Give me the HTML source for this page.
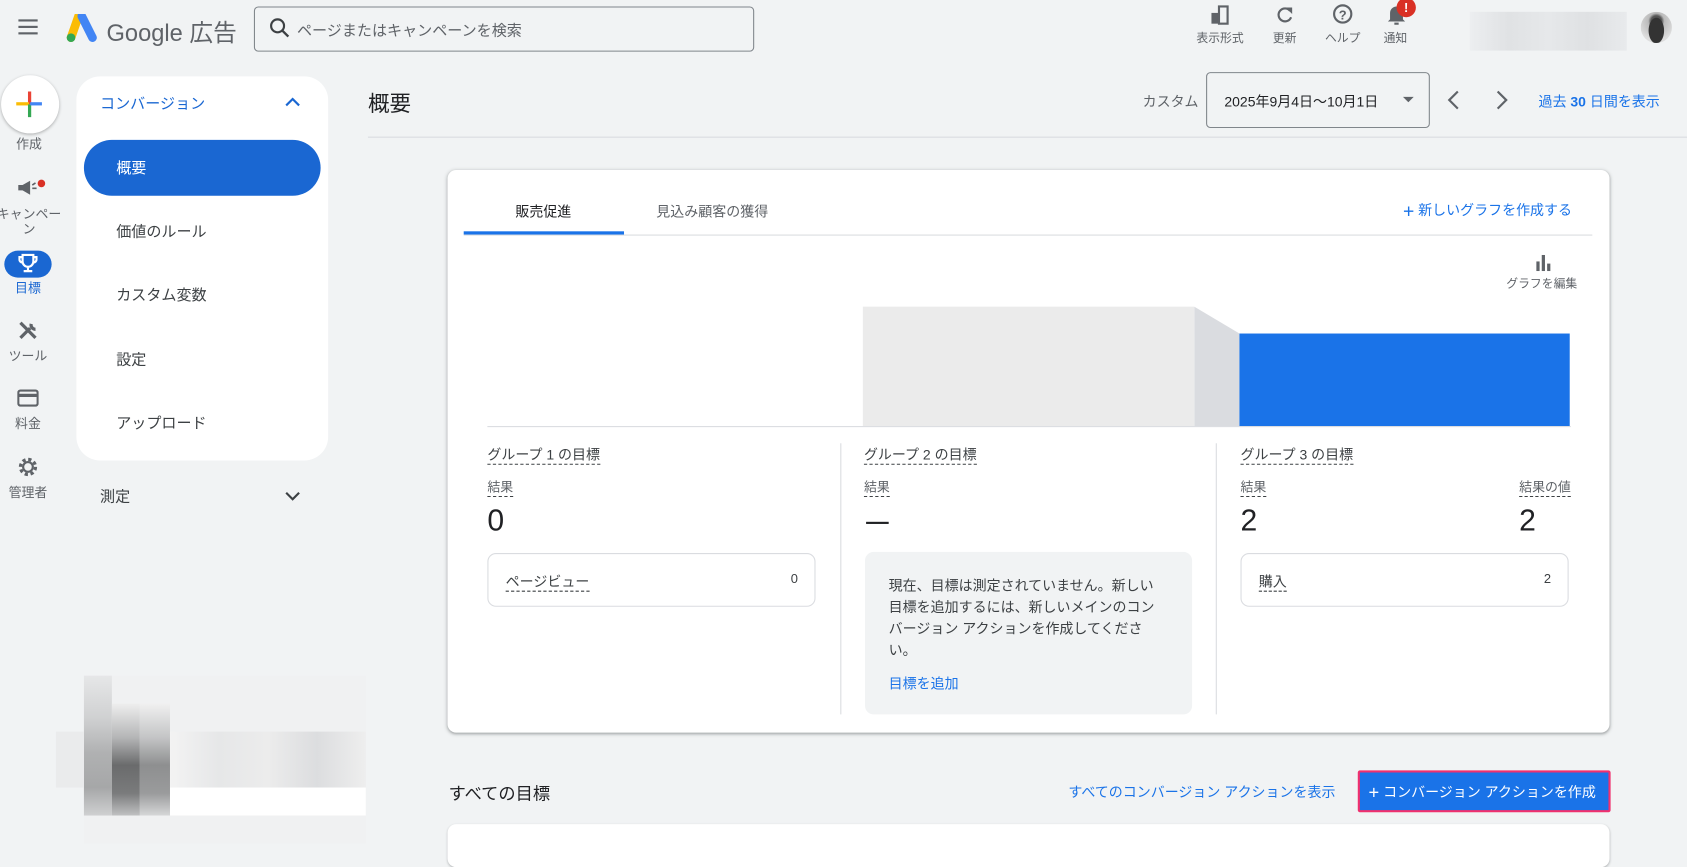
<!DOCTYPE html>
<html><head><meta charset="utf-8"><style>
*{box-sizing:border-box;margin:0;padding:0}
html,body{width:1687px;height:843px;overflow:hidden;background:#f1f3f4}
body{font-family:"Liberation Sans","Noto Sans CJK JP",sans-serif;color:#3c4043}
#w{position:absolute;left:0;top:0;width:1568px;height:784px;transform:scale(1.07589);transform-origin:0 0}
.a{position:absolute;white-space:nowrap}
.blue{color:#1a73e8}
.lbl{font-size:11px;color:#5f6368;text-align:center;width:70px}
.dot{border-bottom:1px dashed #3c4043;padding-bottom:1px}
.nav{font-size:14px;color:#3c4043}
</style></head><body><div id="w">
<svg class="a" style="left:17px;top:17px" width="20" height="16"><rect y="1" width="18" height="2" fill="#5f6368"/><rect y="7" width="18" height="2" fill="#5f6368"/><rect y="13" width="18" height="2" fill="#5f6368"/></svg>
<svg class="a" style="left:60px;top:13px" width="32" height="26" viewBox="0 0 32 26"><path d="M13 2 L6 22" stroke="#fbbc04" stroke-width="8" stroke-linecap="round"/><path d="M16 2 L26 22" stroke="#4285f4" stroke-width="8" stroke-linecap="round"/><circle cx="6" cy="22" r="4" fill="#34a853"/></svg>
<div class="a" style="left:99px;top:13px;font-size:22px;color:#5f6368">Google 広告</div>
<div class="a" style="left:236px;top:6px;width:465px;height:42px;border:1px solid #80868b;border-radius:4px"></div>
<svg class="a" style="left:250px;top:16px" width="20" height="20"><circle cx="8" cy="8" r="6" fill="none" stroke="#3c4043" stroke-width="2"/><path d="M12.5 12.5 L18 18" stroke="#3c4043" stroke-width="2.2"/></svg>
<div class="a" style="left:276px;top:18px;font-size:14px;color:#5f6368">ページまたはキャンペーンを検索</div>
<svg class="a" style="left:1124px;top:4px" width="20" height="20"><rect x="2" y="8" width="7" height="10" fill="#5f6368"/><rect x="9" y="2" width="8" height="16" fill="none" stroke="#5f6368" stroke-width="2"/></svg>
<div class="a lbl" style="left:1099px;top:27px">表示形式</div>
<svg class="a" style="left:1184px;top:4px" width="20" height="20"><path d="M15 6 A6 6 0 1 0 16 12" fill="none" stroke="#5f6368" stroke-width="2"/><path d="M11 3 L17 3 L17 9 Z" fill="#5f6368"/></svg>
<div class="a lbl" style="left:1159px;top:27px">更新</div>
<svg class="a" style="left:1238px;top:3px" width="20" height="20"><circle cx="10" cy="10" r="8" fill="none" stroke="#5f6368" stroke-width="2"/><text x="10" y="15" font-size="12" font-weight="bold" text-anchor="middle" fill="#5f6368" font-family="Liberation Sans">?</text></svg>
<div class="a lbl" style="left:1213px;top:27px">ヘルプ</div>
<svg class="a" style="left:1288px;top:3px" width="20" height="22"><path d="M4 15 L4 9 A6 6 0 0 1 16 9 L16 15 L18 17 L2 17 Z" fill="#5f6368"/><rect x="8" y="18" width="4" height="2" fill="#5f6368"/></svg>
<div class="a" style="left:1298px;top:-2px;width:18px;height:18px;border-radius:50%;background:#d93025;color:#fff;font-size:12px;font-weight:bold;text-align:center;line-height:18px">!</div>
<div class="a lbl" style="left:1262px;top:27px">通知</div>
<div class="a" style="left:1366px;top:11px;width:146px;height:36px;background:linear-gradient(90deg,#eceef0,#e0e2e4,#e6e8ea,#dfe1e3,#e8eaec);"></div>
<div class="a" style="left:1525px;top:11px;width:29px;height:29px;border-radius:50%;background:radial-gradient(ellipse 30% 50% at 50% 60%,#333 0 80%,transparent 85%),radial-gradient(circle at 50% 30%,#555 0 20%,#bbb 30%,#ddd 70%)"></div>
<div class="a" style="left:1px;top:70px;width:54px;height:54px;border-radius:50%;background:#fff;box-shadow:0 1px 3px rgba(0,0,0,.3)"></div>
<svg class="a" style="left:15px;top:85px" width="24" height="24"><rect x="11" y="0" width="3" height="12" fill="#ea4335"/><rect x="0" y="10" width="12" height="3" fill="#fbbc04"/><rect x="11" y="12" width="3" height="12" fill="#34a853"/><rect x="13" y="10" width="11" height="3" fill="#4285f4"/></svg>
<div class="a lbl" style="left:-8px;top:125px;font-size:12px">作成</div>
<svg class="a" style="left:15px;top:166px" width="22" height="18"><path d="M2 6 L6 6 L13 2 L13 15 L6 11 L2 11 Z" fill="#5f6368"/><path d="M15 6 L18 4 M15 9 L19 9" stroke="#5f6368" stroke-width="1.5"/></svg>
<div class="a" style="left:35px;top:167px;width:7px;height:7px;border-radius:50%;background:#d93025"></div>
<div class="a lbl" style="left:-8px;top:190px;font-size:12px">キャンペー</div>
<div class="a lbl" style="left:-8px;top:204px;font-size:12px">ン</div>
<div class="a" style="left:4px;top:233px;width:44px;height:25px;border-radius:13px;background:#1a67d2"></div>
<svg class="a" style="left:17px;top:235px" width="18" height="20"><path d="M4 2 L14 2 L14 8 A5 5 0 0 1 4 8 Z M4 4 L1 4 L1 6 A3 3 0 0 0 4 9 M14 4 L17 4 L17 6 A3 3 0 0 1 14 9 M9 13 L9 16 M5 17 L13 17" fill="none" stroke="#fff" stroke-width="2"/></svg>
<div class="a lbl" style="left:-9px;top:259px;font-size:12px;color:#1a67d2">目標</div>
<svg class="a" style="left:16px;top:297px" width="20" height="20"><path d="M3 17 L12 8 M13 4 A4 4 0 0 0 17 9" stroke="#5f6368" stroke-width="3" fill="none"/><path d="M3 3 L17 17" stroke="#5f6368" stroke-width="3"/></svg>
<div class="a lbl" style="left:-9px;top:322px;font-size:12px">ツール</div>
<svg class="a" style="left:16px;top:361px" width="20" height="18"><rect x="1" y="2" width="18" height="14" rx="2" fill="none" stroke="#5f6368" stroke-width="2"/><rect x="1" y="5" width="18" height="3" fill="#5f6368"/></svg>
<div class="a lbl" style="left:-9px;top:385px;font-size:12px">料金</div>
<svg class="a" style="left:16px;top:424px" width="20" height="20"><circle cx="10" cy="10" r="7" fill="none" stroke="#5f6368" stroke-width="3" stroke-dasharray="3 2.5"/><circle cx="10" cy="10" r="4.5" fill="none" stroke="#5f6368" stroke-width="2"/></svg>
<div class="a lbl" style="left:-9px;top:449px;font-size:12px">管理者</div>
<div class="a" style="left:71px;top:71px;width:234px;height:357px;background:#fff;border-radius:22px"></div>
<div class="a" style="left:93px;top:86px;font-size:14px;color:#1a67d2">コンバージョン</div>
<svg class="a" style="left:265px;top:90px" width="14" height="10"><path d="M1 8 L7 2 L13 8" fill="none" stroke="#1a67d2" stroke-width="2"/></svg>
<div class="a" style="left:78px;top:130px;width:220px;height:52px;border-radius:26px;background:#1a67d2"></div>
<div class="a" style="left:108px;top:146px;font-size:14px;color:#fff">概要</div>
<div class="a nav" style="left:108px;top:205px">価値のルール</div>
<div class="a nav" style="left:108px;top:264px">カスタム変数</div>
<div class="a nav" style="left:108px;top:324px">設定</div>
<div class="a nav" style="left:108px;top:383px">アップロード</div>
<div class="a nav" style="left:93px;top:451px">測定</div>
<svg class="a" style="left:265px;top:456px" width="14" height="10"><path d="M1 2 L7 8 L13 2" fill="none" stroke="#3c4043" stroke-width="2"/></svg>
<div class="a" style="left:78px;top:628px;width:262px;height:156px;background:#f0f1f2"></div>
<div class="a" style="left:78px;top:628px;width:26px;height:130px;background:linear-gradient(180deg,#e6e7e8,#d0d1d2 30%,#b0b1b2 55%,#a6a7a8 80%,#cfd0d1)"></div>
<div class="a" style="left:104px;top:654px;width:26px;height:104px;background:linear-gradient(180deg,#eeeeee,#b5b6b7 30%,#6a6b6c 55%,#7a7b7c 80%,#c0c1c2)"></div>
<div class="a" style="left:130px;top:654px;width:28px;height:104px;background:linear-gradient(180deg,#f0f0f0,#c4c5c6 30%,#8e8f90 55%,#9a9b9c 80%,#d6d7d8)"></div>
<div class="a" style="left:158px;top:680px;width:182px;height:52px;background:linear-gradient(90deg,#f3f3f3,#e6e7e8,#ececec,#dcdddf,#eeeeee)"></div>
<div class="a" style="left:158px;top:732px;width:182px;height:26px;background:#fff"></div>
<div class="a" style="left:52px;top:680px;width:26px;height:52px;background:#eaebec"></div>
<div class="a" style="left:342px;top:80px;font-size:20px;color:#202124">概要</div>
<div class="a" style="left:342px;top:127px;width:1226px;height:1px;background:#dadce0"></div>
<div class="a" style="left:1062px;top:84px;font-size:13px;color:#5f6368">カスタム</div>
<div class="a" style="left:1121px;top:67px;width:208px;height:52px;border:1px solid #80868b;border-radius:4px"></div>
<div class="a" style="left:1138px;top:84px;font-size:13px;color:#202124">2025年9月4日〜10月1日</div>
<svg class="a" style="left:1303px;top:89px" width="12" height="8"><path d="M1 1 L11 1 L6 6 Z" fill="#5f6368"/></svg>
<svg class="a" style="left:1344px;top:83px" width="14" height="20"><path d="M11 2 L3 10 L11 18" fill="none" stroke="#5f6368" stroke-width="2"/></svg>
<svg class="a" style="left:1389px;top:83px" width="14" height="20"><path d="M3 2 L11 10 L3 18" fill="none" stroke="#5f6368" stroke-width="2"/></svg>
<div class="a blue" style="left:1430px;top:84px;font-size:13px">過去 <b>30</b> 日間を表示</div>
<div class="a" style="left:416px;top:158px;width:1080px;height:523px;background:#fff;border-radius:8px;box-shadow:0 1px 2px rgba(60,64,67,.3),0 1px 3px 1px rgba(60,64,67,.15)"></div>
<div class="a" style="left:431px;top:218px;width:1049px;height:1px;background:#dadce0"></div>
<div class="a" style="left:431px;top:215px;width:149px;height:3px;background:#1a73e8"></div>
<div class="a" style="left:479px;top:186px;font-size:13px;color:#202124">販売促進</div>
<div class="a" style="left:610px;top:186px;font-size:13px;color:#5f6368">見込み顧客の獲得</div>
<div class="a blue" style="left:1304px;top:185px;font-size:13px"><span style="font-size:18px;vertical-align:-2px">+</span> 新しいグラフを作成する</div>
<svg class="a" style="left:1427px;top:236px" width="16" height="16"><rect x="1" y="7" width="3" height="9" fill="#5f6368"/><rect x="6" y="1" width="3" height="15" fill="#5f6368"/><rect x="11" y="9" width="3" height="7" fill="#5f6368"/></svg>
<div class="a" style="left:1400px;top:255px;font-size:11px;color:#5f6368">グラフを編集</div>
<div class="a" style="left:802px;top:285px;width:308px;height:111px;background:#ebebeb"></div>
<svg class="a" style="left:1110px;top:285px" width="42" height="111"><path d="M0 0 L42 25 L42 111 L0 111 Z" fill="#dadce0"/></svg>
<div class="a" style="left:1152px;top:310px;width:307px;height:86px;background:#1a73e8"></div>
<div class="a" style="left:453px;top:396px;width:1007px;height:1px;background:#dadce0"></div>
<div class="a" style="left:781px;top:412px;width:1px;height:252px;background:#dadce0"></div>
<div class="a" style="left:1130px;top:412px;width:1px;height:252px;background:#dadce0"></div>
<div class="a" style="left:453px;top:412px;font-size:13px;color:#3c4043"><span class="dot">グループ 1 の目標</span></div>
<div class="a" style="left:453px;top:444px;font-size:12px;color:#5f6368"><span class="dot">結果</span></div>
<div class="a" style="left:453px;top:468px;font-size:28px;color:#202124">0</div>
<div class="a" style="left:453px;top:514px;width:305px;height:50px;border:1px solid #dadce0;border-radius:8px"></div>
<div class="a" style="left:470px;top:530px;font-size:13px"><span class="dot">ページビュー</span></div>
<div class="a" style="left:735px;top:531px;font-size:12px">0</div>
<div class="a" style="left:803px;top:412px;font-size:13px"><span class="dot">グループ 2 の目標</span></div>
<div class="a" style="left:803px;top:444px;font-size:12px;color:#5f6368"><span class="dot">結果</span></div>
<div class="a" style="left:805px;top:485px;width:21px;height:2px;background:#202124"></div>
<div class="a" style="left:804px;top:513px;width:304px;height:151px;background:#f1f3f4;border-radius:8px"></div>
<div class="a" style="left:826px;top:535px;font-size:13px;line-height:20px;white-space:normal;width:250px;color:#3c4043">現在、目標は測定されていません。新しい目標を追加するには、新しいメインのコンバージョン アクションを作成してください。</div>
<div class="a blue" style="left:826px;top:625px;font-size:13px">目標を追加</div>
<div class="a" style="left:1153px;top:412px;font-size:13px"><span class="dot">グループ 3 の目標</span></div>
<div class="a" style="left:1153px;top:444px;font-size:12px;color:#5f6368"><span class="dot">結果</span></div>
<div class="a" style="left:1412px;top:444px;font-size:12px;color:#5f6368"><span class="dot">結果の値</span></div>
<div class="a" style="left:1153px;top:468px;font-size:28px;color:#202124">2</div>
<div class="a" style="left:1412px;top:468px;font-size:28px;color:#202124">2</div>
<div class="a" style="left:1153px;top:514px;width:305px;height:50px;border:1px solid #dadce0;border-radius:8px"></div>
<div class="a" style="left:1170px;top:530px;font-size:13px"><span class="dot">購入</span></div>
<div class="a" style="left:1435px;top:531px;font-size:12px">2</div>
<div class="a" style="left:417px;top:724px;font-size:16px;color:#202124">すべての目標</div>
<div class="a blue" style="left:993px;top:726px;font-size:13px">すべてのコンバージョン アクションを表示</div>
<div class="a" style="left:1262px;top:716px;width:235px;height:39px;border:2px solid #f0306e;background:#1a73e8;border-radius:2px"></div>
<div class="a" style="left:1272px;top:726px;font-size:13px;color:#fff"><span style="font-size:17px;vertical-align:-1px">+</span> コンバージョン アクションを作成</div>
<div class="a" style="left:416px;top:766px;width:1080px;height:40px;background:#fff;border-radius:8px;box-shadow:0 1px 2px rgba(60,64,67,.3)"></div>
</div></body></html>
